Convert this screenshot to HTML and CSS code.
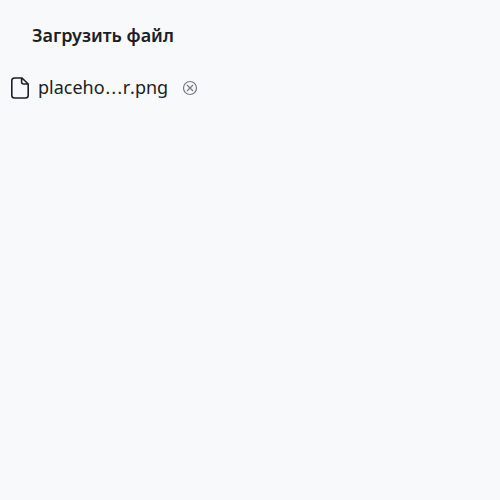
FILE: index.html
```html
<!DOCTYPE html>
<html lang="ru">
<head>
<meta charset="utf-8">
<title>Загрузить файл</title>
<link rel="stylesheet" href="styles.css">
</head>
<body>
<main class="upload">
  <button class="upload-button" type="button">Загрузить файл</button>
  <div class="file">
    <svg class="file-icon" viewBox="0 0 24 24" aria-hidden="true"><path d="M14 2H6.500Q3.800 2 3.800 4.700V19.300Q3.800 22 6.500 22H17.500Q20.200 22 20.200 19.300V8ZM13.600 2V6Q13.600 8 15.600 8H20"/></svg>
    <span class="file-name">placeho<span class="ellipsis">…</span>r.png</span>
    <button class="remove" type="button" aria-label="Удалить">
      <svg class="remove-icon" viewBox="0 0 16 16" aria-hidden="true"><circle cx="8" cy="8" r="6.500"/><path d="M5 5L11 11M11 5L5 11"/></svg>
    </button>
  </div>
</main>
</body>
</html>
```
FILE: styles.css
```css
body {
  margin: 0;
  background: #f8f9fb;
  color: #1c2023;
  font-family: "Noto Sans", sans-serif;
}

.upload {
  display: flex;
  flex-direction: column;
  align-items: flex-start;
  gap: 6px;
  padding: 8px;
}

.upload-button {
  height: 54px;
  padding: 0 24px;
  border: 0;
  background: transparent;
  color: inherit;
  font: 600 18px/24px "Noto Sans", sans-serif;
}

.file {
  display: flex;
  align-items: center;
  height: 40px;
}

.file-icon {
  width: 24px;
  height: 24px;
  margin-right: 6px;
  fill: none;
  stroke: #1c2023;
  stroke-width: 1.6;
  stroke-linejoin: round;
}

.file-name {
  padding-bottom: 2px;
  font-size: 18px;
  line-height: 24px;
  font-kerning: none;
}

.ellipsis {
  font-family: "DejaVu Sans", sans-serif;
}

.remove {
  display: flex;
  margin-left: 14px;
  padding: 0;
  border: 0;
  background: transparent;
}

.remove-icon {
  width: 16px;
  height: 16px;
  fill: none;
  stroke: #777a7d;
  stroke-width: 1.2;
}
```
